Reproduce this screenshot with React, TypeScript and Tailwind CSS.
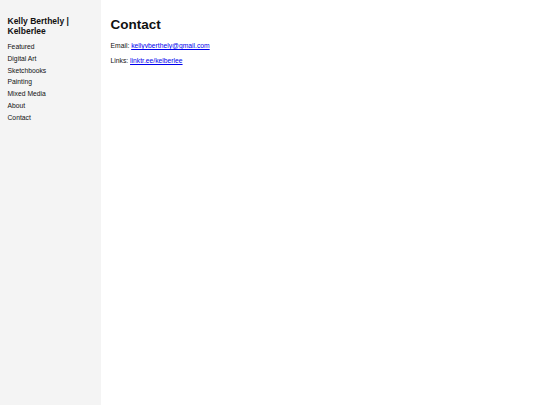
import React from 'react';

const navItems = ['Featured', 'Digital Art', 'Sketchbooks', 'Painting', 'Mixed Media', 'About', 'Contact'];

export default function App() {
  return (
    <div className="flex min-h-[405px] w-full bg-white text-[#111] font-['Liberation_Sans',Arial,sans-serif]">
      {/* Sidebar */}
      <aside className="w-[101px] shrink-0 bg-[#f4f4f4] pl-[7.5px] pr-[6px] pt-[15.7px]">
        <h1 className="text-[8.5px] leading-[10.5px] font-bold">Kelly Berthely | Kelberlee</h1>
        <nav className="mt-[4.2px] flex flex-col">
          {navItems.map((item) => (
            <a key={item} href="#" className="text-[6.75px] leading-[11.83px] text-[#111]">
              {item}
            </a>
          ))}
        </nav>
      </aside>

      {/* Main */}
      <main className="flex-1 pl-[9.5px] pt-[17px]">
        <h2 className="text-[13.5px] leading-[16px] font-bold">Contact</h2>
        <div className="mt-[6.3px] flex flex-col gap-[2px] text-[6.75px] leading-[13px]">
          <p>
            Email:{' '}
            <a href="mailto:kellyvberthely@gmail.com" className="text-[#0000ee] underline">
              kellyvberthely@gmail.com
            </a>
          </p>
          <p>
            Links:{' '}
            <a href="#" className="text-[#0000ee] underline">
              linktr.ee/kelberlee
            </a>
          </p>
        </div>
      </main>
    </div>
  );
}
